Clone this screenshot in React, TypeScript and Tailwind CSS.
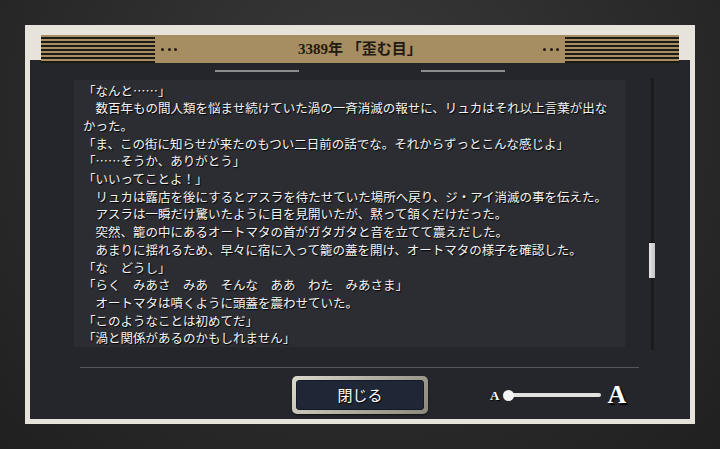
import React from "react";

const lines = [
  "「なんと……」",
  "　数百年もの間人類を悩ませ続けていた渦の一斉消滅の報せに、リュカはそれ以上言葉が出な",
  "かった。",
  "「ま、この街に知らせが来たのもつい二日前の話でな。それからずっとこんな感じよ」",
  "「……そうか、ありがとう」",
  "「いいってことよ！」",
  "　リュカは露店を後にするとアスラを待たせていた場所へ戻り、ジ・アイ消滅の事を伝えた。",
  "　アスラは一瞬だけ驚いたように目を見開いたが、黙って頷くだけだった。",
  "　突然、籠の中にあるオートマタの首がガタガタと音を立てて震えだした。",
  "　あまりに揺れるため、早々に宿に入って籠の蓋を開け、オートマタの様子を確認した。",
  "「な　どうし」",
  "「らく　みあさ　みあ　そんな　ああ　わた　みあさま」",
  "　オートマタは噴くように頭蓋を震わせていた。",
  "「このようなことは初めてだ」",
  "「渦と関係があるのかもしれません」",
];

function Stripes() {
  return (
    <div className="w-[114px] h-full bg-[repeating-linear-gradient(180deg,#a68d62_0px,#a68d62_2px,#1d1a15_2px,#1d1a15_4px)]" />
  );
}

function Dots() {
  return (
    <div className="flex items-center gap-[3.5px]">
      <span className="w-[3px] h-[3px] rounded-full bg-[#221c14]" />
      <span className="w-[3px] h-[3px] rounded-full bg-[#221c14]" />
      <span className="w-[3px] h-[3px] rounded-full bg-[#221c14]" />
    </div>
  );
}

export default function App() {
  return (
    <div className="w-[720px] h-[449px] overflow-hidden flex items-center justify-center bg-[radial-gradient(ellipse_at_50%_25%,#3a3a3b_0%,#2b2b2c_55%,#202021_100%)]">
      {/* Cream frame */}
      <div className="w-[670px] h-[399px] bg-[#e7e3da] flex flex-col px-[5px] pb-[5px]">
        {/* Header */}
        <div className="relative z-10 mx-[11px] mt-[10px] h-[28px] flex items-center bg-[#a68d62]">
          <Stripes />
          <div className="ml-[6px]">
            <Dots />
          </div>
          <div className="flex-1 text-center text-[15px] leading-none font-bold text-[#231a10] font-['Liberation_Serif','Noto_Sans_CJK_JP',serif]">
            3389年 「歪む目」
          </div>
          <div className="mr-[6px]">
            <Dots />
          </div>
          <Stripes />
        </div>

        {/* Dark panel */}
        <div className="-mt-[3px] flex-1 flex flex-col bg-[#25262b]">
          {/* Tab lines */}
          <div className="mt-[10px] flex justify-center gap-[122px]">
            <div className="w-[84px] h-[2px] bg-[#8e8e90]" />
            <div className="w-[84px] h-[2px] bg-[#8e8e90]" />
          </div>

          {/* Text area + scrollbar */}
          <div className="mt-[8px] flex pl-[44px]">
            <div className="w-[551px] h-[267px] bg-[#2c2d32] pl-[9px] pt-[1.5px] font-['Noto_Sans_CJK_JP',sans-serif] text-[12.5px] leading-[17.7px] text-[#f3f3f3] [text-shadow:1px_1px_1px_#000]">
              {lines.map((l, i) => (
                <div key={i} className="whitespace-pre">
                  {l}
                </div>
              ))}
            </div>
            <div className="relative ml-[24px] -mt-[2px] w-[6px] h-[272px] flex justify-center">
              <div className="w-[3px] h-full bg-[#1a1b1f]" />
              <div className="absolute left-0 top-[164px] w-[6px] h-[36px] bg-[linear-gradient(90deg,#e4e4e4,#c4c4c6)] border-t border-[#111]" />
            </div>
          </div>

          {/* Separator */}
          <div className="ml-[50px] mt-[17px] w-[559px] h-px bg-[#56575c]" />

          {/* Bottom controls */}
          <div className="mt-[8px] grid grid-cols-[1fr_auto_1fr] items-center">
            <div />
            <button className="w-[136px] h-[38px] rounded-[5px] p-[4px] bg-[linear-gradient(135deg,#dcd8cc,#a9a598_60%,#8c887c)] shadow-[0_1px_2px_rgba(0,0,0,0.6)]">
              <div className="w-full h-full rounded-[3px] bg-[#1f2737] border border-[#141a25] flex items-center justify-center text-[15px] text-white font-['Noto_Sans_CJK_JP',sans-serif] [text-shadow:1px_1px_1px_#000]">
                閉じる
              </div>
            </button>
            <div className="flex items-center pl-[62px] font-['Liberation_Serif',serif] font-bold text-white [text-shadow:1px_1px_1px_#000]">
              <span className="text-[13px] leading-none">A</span>
              <div className="relative ml-[4px] w-[98px] h-[11px] flex items-center">
                <div className="ml-[6px] w-[92px] h-[4.5px] rounded-full bg-[#e2e2e2]" />
                <div className="absolute left-0 top-0 w-[11px] h-[11px] rounded-full bg-[#f4f4f4]" />
              </div>
              <span className="ml-[6px] text-[26px] leading-none [text-shadow:2px_2px_1px_#000]">
                A
              </span>
            </div>
          </div>
        </div>
      </div>
    </div>
  );
}
